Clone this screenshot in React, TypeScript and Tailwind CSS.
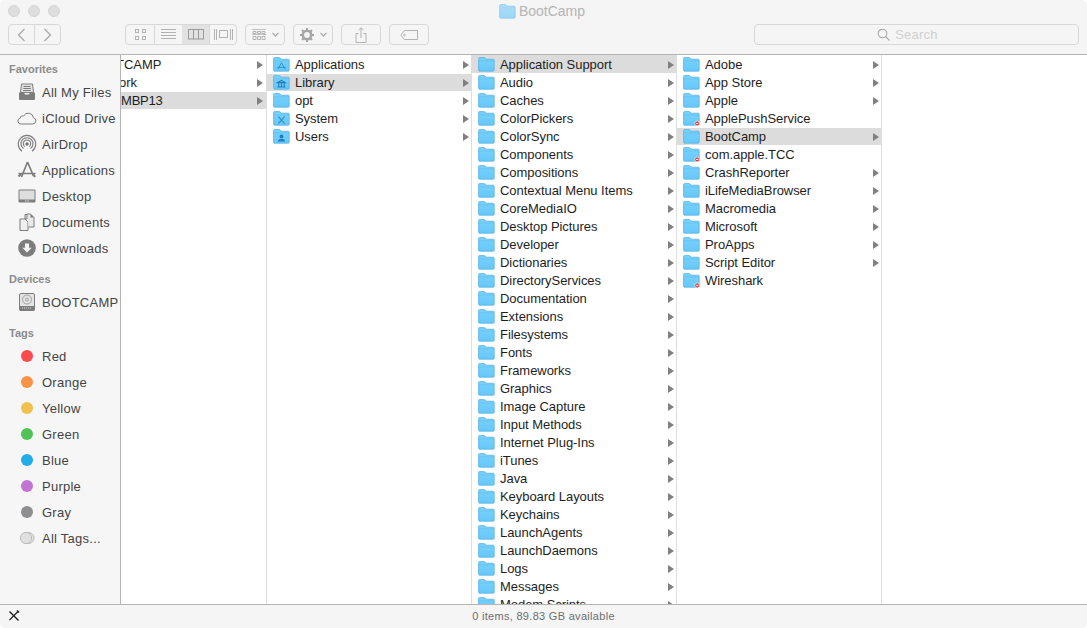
import React from "react";

type Glyph = "none" | "apps" | "library" | "system" | "users";

function Folder({ glyph = "none", badge = false, dim = false }: { glyph?: Glyph; badge?: boolean; dim?: boolean }) {
  const id = dim ? "fgd" : "fg";
  return (
    <svg width="17" height="15" viewBox="0 0 17 15" className="shrink-0">
      <defs>
        <linearGradient id={id} x1="0" y1="0" x2="0" y2="1">
          <stop offset="0" stopColor={dim ? "#a9dcf8" : "#7ad2fc"} />
          <stop offset="1" stopColor={dim ? "#9dd8f8" : "#66c8fa"} />
        </linearGradient>
      </defs>
      <path d="M.6 1.6C.6 1 1 .6 1.6 .6h4.6c.5 0 .8.2 1 .5L8 2.2h7.2c.6 0 1 .4 1 1V13.2c0 .6-.4 1-1 1H1.6c-.6 0-1-.4-1-1z" fill={`url(#${id})`} stroke={dim ? "#8fcbed" : "#55b2e6"} strokeWidth="0.8" />
      <path d="M1 3.9h15" stroke={dim ? "#a0d4f0" : "#62bdee"} strokeWidth="0.7" />
      {glyph === "apps" && <path d="M8.5 5.6 5 12.2M8.5 5.6l3.5 6.6M4.2 10.4h8.6" stroke="#2f8fcc" strokeWidth="0.9" fill="none" />}
      {glyph === "library" && <path d="M4.6 7.6 8.5 5.4l3.9 2.2zM5.8 8.2v3.2M8.5 8.2v3.2M11.2 8.2v3.2M4.4 12h8.2" stroke="#1f7fbe" strokeWidth="1.1" fill="none" />}
      {glyph === "system" && <path d="M5.4 5.6 11.6 12.6M11.6 5.6 5.4 12.6" stroke="#2f8fcc" strokeWidth="1.2" fill="none" />}
      {glyph === "users" && (
        <g fill="#1f7fbe">
          <circle cx="8.5" cy="7.4" r="1.9" />
          <path d="M4.8 12.6c.2-2 1.7-2.9 3.7-2.9s3.5.9 3.7 2.9z" />
        </g>
      )}
      {badge && (
        <g>
          <circle cx="14.2" cy="12.4" r="2.4" fill="#e2332e" stroke="#fff" strokeWidth="0.6" />
          <path d="M12.9 12.4h2.6" stroke="#fff" strokeWidth="0.9" />
        </g>
      )}
    </svg>
  );
}

function Arrow() {
  return (
    <svg width="6" height="8" viewBox="0 0 6 8" className="shrink-0">
      <path d="M0 0 6 4 0 8z" fill="#808080" />
    </svg>
  );
}

type Row = { n: string; arrow?: boolean; sel?: boolean; first?: boolean; badge?: boolean; glyph?: Glyph };

function FileRow({ r }: { r: Row }) {
  return (
    <div className={`flex shrink-0 items-center pl-[6px] pr-[2px] text-[13px] leading-[17px] tracking-[-0.05px] text-[#1e1e1e] ${r.first ? "-mt-px mb-px h-[18px] pt-px" : "mb-px h-[17px]"} ${r.sel ? "bg-[#dcdcdc]" : ""}`}>
      <Folder glyph={r.glyph} badge={r.badge} />
      <span className="ml-[5px] flex-1 whitespace-nowrap">{r.n}</span>
      {r.arrow !== false && <Arrow />}
    </div>
  );
}

const col3Names = [
  "Application Support", "Audio", "Caches", "ColorPickers", "ColorSync", "Components", "Compositions", "Contextual Menu Items", "CoreMediaIO", "Desktop Pictures", "Developer", "Dictionaries", "DirectoryServices", "Documentation", "Extensions", "Filesystems", "Fonts", "Frameworks", "Graphics", "Image Capture", "Input Methods", "Internet Plug-Ins", "iTunes", "Java", "Keyboard Layouts", "Keychains", "LaunchAgents", "LaunchDaemons", "Logs", "Messages", "Modem Scripts",
];

const col2: Row[] = [
  { n: "Applications", glyph: "apps" },
  { n: "Library", glyph: "library", sel: true },
  { n: "opt" },
  { n: "System", glyph: "system" },
  { n: "Users", glyph: "users" },
];

const col4: Row[] = [
  { n: "Adobe" },
  { n: "App Store" },
  { n: "Apple" },
  { n: "ApplePushService", arrow: false, badge: true },
  { n: "BootCamp", sel: true },
  { n: "com.apple.TCC", arrow: false, badge: true },
  { n: "CrashReporter" },
  { n: "iLifeMediaBrowser" },
  { n: "Macromedia" },
  { n: "Microsoft" },
  { n: "ProApps" },
  { n: "Script Editor" },
  { n: "Wireshark", arrow: false, badge: true },
];

function SideItem({ icon, label }: { icon: React.ReactNode; label: string }) {
  return (
    <div className="flex h-[26px] shrink-0 items-center">
      <div className="flex w-[42px] shrink-0 justify-end pr-[5px]">{icon}</div>
      <span className="whitespace-nowrap pt-[2px] text-[13px] tracking-[0.25px] text-[#444]">{label}</span>
    </div>
  );
}

function Heading({ children, className = "" }: { children: React.ReactNode; className?: string }) {
  return <div className={`h-[14px] pl-[9px] text-[11px] font-bold leading-[14px] text-[#8c8c8c] ${className}`}>{children}</div>;
}

const G = "#7d7d7d";

const AllFiles = (
  <svg width="20" height="20" viewBox="0 0 20 20">
    <path d="M4.5 2h11l1 8.5h-13z" fill="#e2e2e2" stroke={G} />
    <path d="M6.5 4.5h7M6.3 6.5h7.4M6.1 8.5h7.8" stroke={G} />
    <path d="M2 10.5h5l1 2h4l1-2h5v6.5a1 1 0 0 1-1 1H3a1 1 0 0 1-1-1z" fill={G} />
  </svg>
);
const Cloud = (
  <svg width="20" height="20" viewBox="0 0 20 20">
    <path d="M4.5 16h11.3a3.2 3.2 0 0 0 .6-6.3 5.2 5.2 0 0 0-9.7-1.9A3.1 3.1 0 0 0 3 10.2 3 3 0 0 0 4.5 16z" fill="#f5f5f5" stroke={G} />
  </svg>
);
const AirDrop = (
  <svg width="20" height="20" viewBox="0 0 20 20" fill="none" stroke={G}>
    <path d="M5 17.2a8.7 8.7 0 1 1 10 0" strokeWidth="1.1" />
    <path d="M6.5 14.6a6 6 0 1 1 7 0" strokeWidth="1.1" />
    <path d="M7.8 12.6a3.7 3.7 0 1 1 4.4 0" strokeWidth="1.1" />
    <circle cx="10" cy="10" r="1.3" fill={G} />
  </svg>
);
const Apps = (
  <svg width="20" height="20" viewBox="0 0 20 20" fill="none" stroke={G} strokeWidth="1.7">
    <path d="M10.5 2 16.5 16M10.5 2 4.5 17M1.5 13.5h17" />
    <path d="M1.5 16.5 4 14" strokeWidth="2.2" />
    <path d="M18 17l-2-3" strokeWidth="2.2" />
  </svg>
);
const DesktopIcon = (
  <svg width="20" height="20" viewBox="0 0 20 20">
    <rect x="1.5" y="3.5" width="17" height="13" rx="1" fill={G} />
    <rect x="2.5" y="4.5" width="15" height="9" fill="#dedede" />
    <path d="M8 15h.9M9.6 15h.9M11.2 15h.9" stroke="#eee" />
  </svg>
);
const Docs = (
  <svg width="20" height="20" viewBox="0 0 20 20">
    <path d="M3 7h5l3 3v8.5H3z" fill="#f0f0f0" stroke={G} />
    <path d="M10 2h3.5l3.5 3.5V15h-5.5" fill="#e8e8e8" stroke={G} />
    <path d="M13.5 2v3.5H17z" fill={G} />
    <path d="M8 2.5h2V7H8z" fill="#e8e8e8" stroke={G} />
  </svg>
);
const Downloads = (
  <svg width="20" height="20" viewBox="0 0 20 20">
    <circle cx="10" cy="10" r="8.8" fill={G} />
    <path d="M8 5.5h4v4.3h2.6L10 14.6 5.4 9.8H8z" fill="#f5f5f5" />
  </svg>
);
const Disk = (
  <svg width="20" height="20" viewBox="0 0 20 20">
    <rect x="2.5" y="1.5" width="15" height="17" rx="1.5" fill="#e4e4e4" stroke={G} />
    <circle cx="10" cy="7.5" r="4.5" fill="none" stroke="#a0a0a0" />
    <circle cx="10" cy="7.5" r="1.5" fill="none" stroke="#a0a0a0" />
    <rect x="2.5" y="14" width="15" height="4.5" fill={G} />
    <path d="M5 16h1M7 16h1M9 16h1M11 16h1M13 16h1" stroke="#ddd" />
  </svg>
);

function Dot({ c }: { c: string }) {
  return <div className={`mr-[4px] h-[12px] w-[12px] rounded-full ${c}`} />;
}

const AllTags = (
  <svg width="16" height="14" viewBox="0 0 16 14" className="mr-[2px]">
    <circle cx="9.5" cy="7" r="5.6" fill="#e4e4e4" stroke="#bbb" />
    <circle cx="7" cy="7" r="5.6" fill="#e0e0e0" stroke="#bbb" />
  </svg>
);

function Btn({ className = "", children }: { className?: string; children?: React.ReactNode }) {
  return <div className={`flex h-[21px] shrink-0 items-center justify-center rounded-[4px] border border-[#d8d8d8] ${className}`}>{children}</div>;
}

const S = "#b2b2b2";

export default function App() {
  return (
    <div className="flex h-[628px] w-[1087px] flex-col overflow-hidden rounded-[5px] bg-white font-['Liberation_Sans',Arial,sans-serif]">
      <header className="flex h-[55px] shrink-0 flex-col border-b border-[#b4b4b4] bg-[#f5f5f5]">
        <div className="grid h-[24px] grid-cols-[1fr_auto_1fr] items-center pb-[2px]">
          <div className="flex gap-[8px] pl-[8px]">
            <div className="h-[12px] w-[12px] rounded-full border border-[#d4d4d4] bg-[#dedede]" />
            <div className="h-[12px] w-[12px] rounded-full border border-[#d4d4d4] bg-[#dedede]" />
            <div className="h-[12px] w-[12px] rounded-full border border-[#d4d4d4] bg-[#dedede]" />
          </div>
          <div className="flex items-center gap-[3px] pr-[3px]">
            <Folder dim />
            <span className="text-[14px] text-[#b4b4b4]">BootCamp</span>
          </div>
          <div />
        </div>
        <div className="flex items-start pl-[8px] pr-[8px]">
          <Btn className="w-[27px] rounded-r-none">
            <svg width="9" height="14" viewBox="0 0 9 14" fill="none" stroke="#a8a8a8" strokeWidth="1.3"><path d="M7.5 1 1.5 7l6 6" /></svg>
          </Btn>
          <Btn className="-ml-px w-[27px] rounded-l-none">
            <svg width="9" height="14" viewBox="0 0 9 14" fill="none" stroke="#a8a8a8" strokeWidth="1.3"><path d="M1.5 1l6 6-6 6" /></svg>
          </Btn>
          <div className="ml-[64px] flex h-[21px] w-[112px] shrink-0 overflow-hidden rounded-[4px] border border-[#d8d8d8]">
            <div className="flex w-[29px] items-center justify-center border-r border-[#d8d8d8]">
              <svg width="11" height="11" viewBox="0 0 11 11" fill="none" stroke={S}><rect x=".5" y=".5" width="3" height="3" /><rect x="7.5" y=".5" width="3" height="3" /><rect x=".5" y="7.5" width="3" height="3" /><rect x="7.5" y="7.5" width="3" height="3" /></svg>
            </div>
            <div className="flex w-[27px] items-center justify-center">
              <svg width="15" height="11" viewBox="0 0 15 11" stroke={S}><path d="M0 .5h15M0 3.5h15M0 6.5h15M0 9.5h15" /></svg>
            </div>
            <div className="flex w-[27px] items-center justify-center bg-[#e2e2e2]">
              <svg width="16" height="11" viewBox="0 0 16 11" fill="none" stroke="#9a9a9a"><rect x=".5" y=".5" width="15" height="9.5" /><path d="M5.5 .5v9.5M10.5 .5v9.5" /></svg>
            </div>
            <div className="flex flex-1 items-center justify-center border-l border-[#d8d8d8]">
              <svg width="19" height="11" viewBox="0 0 19 11" fill="none" stroke={S}><path d="M.5 0v11M2.5 0v11M16.5 0v11M18.5 0v11" /><rect x="5.5" y="1.5" width="8" height="7" /></svg>
            </div>
          </div>
          <Btn className="ml-[8px] w-[40px] gap-[6px]">
            <svg width="14" height="12" viewBox="0 0 14 12" fill="none" stroke={S}><path d="M0 .5h14M0 5.5h14" opacity=".8" /><path d="M1 2.5h3v2H1zM5.5 2.5h3v2h-3zM10 2.5h3v2h-3zM1 7.5h3v3H1zM5.5 7.5h3v3h-3zM10 7.5h3v3h-3z" /></svg>
            <svg width="7" height="5" viewBox="0 0 7 5" fill="none" stroke="#a8a8a8" strokeWidth="1.2"><path d="M.5 .8 3.5 4l3-3.2" /></svg>
          </Btn>
          <Btn className="ml-[8px] w-[40px] gap-[6px]">
            <svg width="14" height="14" viewBox="0 0 14 14">
              <circle cx="7" cy="7" r="4.2" fill="none" stroke="#a6a6a6" strokeWidth="2.6" />
              <path d="M7 0v2.5M7 11.5V14M0 7h2.5M11.5 7H14M2 2l1.8 1.8M10.2 10.2 12 12M12 2l-1.8 1.8M3.8 10.2 2 12" stroke="#a6a6a6" strokeWidth="2" />
            </svg>
            <svg width="7" height="5" viewBox="0 0 7 5" fill="none" stroke="#a8a8a8" strokeWidth="1.2"><path d="M.5 .8 3.5 4l3-3.2" /></svg>
          </Btn>
          <Btn className="ml-[8px] w-[40px]">
            <svg width="12" height="16" viewBox="0 0 12 16" fill="none" stroke={S}><path d="M3.5 6.5H1v9h10v-9H8.5M6 11V1M3.5 3 6 .8 8.5 3" /></svg>
          </Btn>
          <Btn className="ml-[8px] w-[40px]">
            <svg width="18" height="10" viewBox="0 0 18 10" fill="none" stroke={S}><path d="M4.5 .5h13v9h-13L.8 5z" /><circle cx="4.5" cy="5" r=".8" /></svg>
          </Btn>
          <Btn className="ml-auto w-[325px] gap-[5px] pr-[18px]">
            <svg width="13" height="13" viewBox="0 0 13 13" fill="none" stroke="#a8a8a8" strokeWidth="1.1"><circle cx="5.5" cy="5.5" r="4.3" /><path d="M8.7 8.7 12.5 12.5" /></svg>
            <span className="text-[13px] tracking-[0.25px] text-[#d0d0d0]">Search</span>
          </Btn>
        </div>
      </header>

      <main className="flex min-h-0 flex-1">
        <aside className="flex w-[121px] shrink-0 flex-col overflow-hidden border-r border-[#b4b4b4] bg-[#f6f6f6] pt-[7px]">
          <Heading>Favorites</Heading>
          <div className="mt-[3px]">
            <SideItem icon={AllFiles} label="All My Files" />
            <SideItem icon={Cloud} label="iCloud Drive" />
            <SideItem icon={AirDrop} label="AirDrop" />
            <SideItem icon={Apps} label="Applications" />
            <SideItem icon={DesktopIcon} label="Desktop" />
            <SideItem icon={Docs} label="Documents" />
            <SideItem icon={Downloads} label="Downloads" />
          </div>
          <Heading className="mt-[11px]">Devices</Heading>
          <div className="mt-[3px]">
            <SideItem icon={Disk} label="BOOTCAMP" />
          </div>
          <Heading className="mt-[11px]">Tags</Heading>
          <div className="mt-[3px]">
            <SideItem icon={<Dot c="bg-[#fa4c4e]" />} label="Red" />
            <SideItem icon={<Dot c="bg-[#f89247]" />} label="Orange" />
            <SideItem icon={<Dot c="bg-[#f2c04e]" />} label="Yellow" />
            <SideItem icon={<Dot c="bg-[#50c356]" />} label="Green" />
            <SideItem icon={<Dot c="bg-[#22ace8]" />} label="Blue" />
            <SideItem icon={<Dot c="bg-[#c274d2]" />} label="Purple" />
            <SideItem icon={<Dot c="bg-[#8e8e90]" />} label="Gray" />
            <SideItem icon={AllTags} label="All Tags..." />
          </div>
        </aside>

        <section className="flex w-[146px] shrink-0 flex-col overflow-hidden border-r border-[#dedede] pt-px">
          <div className="mb-px flex h-[17px] shrink-0 items-center pr-[3px] text-[13px] leading-[17px] text-[#1e1e1e]">
            <span className="-ml-[5px] flex-1 whitespace-nowrap">TCAMP</span>
            <Arrow />
          </div>
          <div className="mb-px flex h-[17px] shrink-0 items-center pr-[3px] text-[13px] leading-[17px] text-[#1e1e1e]">
            <span className="-ml-[2px] flex-1 whitespace-nowrap">ork</span>
            <Arrow />
          </div>
          <div className="mb-px flex h-[17px] shrink-0 items-center bg-[#dcdcdc] pr-[3px] text-[13px] leading-[17px] text-[#1e1e1e]">
            <span className="flex-1 whitespace-nowrap tracking-[-0.2px]">MBP13</span>
            <Arrow />
          </div>
        </section>

        <section className="flex w-[205px] shrink-0 flex-col overflow-hidden border-r border-[#dedede] pt-px">
          {col2.map((r) => <FileRow key={r.n} r={r} />)}
        </section>

        <section className="flex w-[205px] shrink-0 flex-col overflow-hidden border-r border-[#dedede] pt-px">
          {col3Names.map((n, i) => <FileRow key={n} r={{ n, sel: i === 0, first: i === 0 }} />)}
        </section>

        <section className="flex w-[205px] shrink-0 flex-col overflow-hidden border-r border-[#dedede] pt-px">
          {col4.map((r) => <FileRow key={r.n} r={r} />)}
        </section>

        <section className="flex-1" />
      </main>

      <footer className="relative flex h-[24px] shrink-0 items-center justify-center border-t border-[#b4b4b4] bg-[#f5f5f5]">
        <svg width="12" height="12" viewBox="0 0 12 12" className="absolute left-[8px] top-[5px]" fill="none" stroke="#222">
          <path d="M1.5 1.5 10.5 10.5" strokeWidth="1.4" />
          <path d="M10 1.5 1.5 10" strokeWidth="1.2" />
          <path d="M9 .5l2 2" strokeWidth="1.6" />
        </svg>
        <span className="text-[11px] tracking-[0.3px] text-[#6e6e6e]">0 items, 89.83 GB available</span>
      </footer>
    </div>
  );
}
